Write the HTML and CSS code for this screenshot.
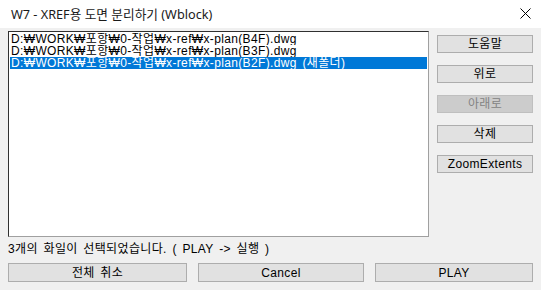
FILE: index.html
```html
<!doctype html>
<html>
<head>
<meta charset="utf-8" />
<title>W7 - XREF용 도면 분리하기 (Wblock)</title>
<link rel="stylesheet" href="styles.css">
</head>
<body>

<div class="dialog">
  <div class="titlebar">
    <span class="title">W7 - XREF용 도면 분리하기 (Wblock)</span>
    <svg class="close" width="11" height="11" viewBox="0 0 11 11">
      <path d="M0.5 0.5 L10.5 10.5 M10.5 0.5 L0.5 10.5" stroke="#000" stroke-width="1" fill="none"/>
    </svg>
  </div>

  <div class="body">
    <div class="main">
      <ul class="list">
        <li>D:₩WORK₩포항₩0-작업₩x-ref₩x-plan(B4F).dwg</li>
        <li>D:₩WORK₩포항₩0-작업₩x-ref₩x-plan(B3F).dwg</li>
        <li class="selected">D:₩WORK₩포항₩0-작업₩x-ref₩x-plan(B2F).dwg (새폴더)</li>
      </ul>
      <div class="side">
        <button class="btn">도움말</button>
        <button class="btn">위로</button>
        <button class="btn" disabled>아래로</button>
        <button class="btn">삭제</button>
        <button class="btn">ZoomExtents</button>
      </div>
    </div>

    <p class="status">3개의 화일이 선택되었습니다. ( PLAY -&gt; 실행 )</p>

    <div class="actions">
      <button class="btn">전체 취소</button>
      <button class="btn">Cancel</button>
      <button class="btn">PLAY</button>
    </div>
  </div>
</div>

</body>
</html>
```

FILE: styles.css
```css
* { box-sizing: border-box; }

html, body {
  margin: 0;
  padding: 0;
}

body {
  width: 541px;
  height: 290px;
  overflow: hidden;
  font-family: "Liberation Sans", "Noto Sans CJK KR", sans-serif;
  font-size: 12px;
  letter-spacing: 0.35px;
  word-spacing: 2px;
  color: #000;
}

.dialog {
  height: 290px;
  display: flex;
  flex-direction: column;
  background: #F0F0F0;
}

.titlebar {
  height: 28px;
  background: #FFF;
  display: flex;
  align-items: center;
  justify-content: space-between;
  padding: 0 10px 0 11px;
}

.title {
  font-family: "Noto Sans", "Noto Sans CJK KR", sans-serif;
  font-size: 12.7px;
  letter-spacing: 0;
  word-spacing: 0;
  color: #1a1a1a;
  margin-top: -2px;
}

.close { margin-top: -1px; }

.body {
  padding: 3px 8px 0 8px;
}

.main {
  display: flex;
  align-items: flex-start;
}

.list {
  list-style: none;
  margin: 0;
  padding: 1px 1px;
  width: 421px;
  height: 206px;
  background: #FFF;
  border: 1px solid #A0A0A0;
  border-top-color: #303030;
  border-left-color: #303030;
}

.list li {
  height: 12px;
  line-height: 12px;
  padding-left: 1px;
  white-space: nowrap;
  overflow: hidden;
}

.list li.selected {
  background: #0078D7;
  color: #FFF;
}

.side {
  display: flex;
  flex-direction: column;
  gap: 12px;
  margin-left: 8px;
  margin-top: 4px;
}

.btn {
  font-family: "Liberation Sans", "Noto Sans CJK KR", sans-serif;
  font-size: 12px;
  letter-spacing: 0.35px;
  word-spacing: 2px;
  color: #000;
  background: #E1E1E1;
  border: 1px solid #ADADAD;
  border-radius: 0;
  height: 18px;
  padding: 0;
  line-height: 14px;
}

.btn:disabled {
  background: #CCCCCC;
  border-color: #BFBFBF;
  color: #838383;
}

.side .btn { width: 96px; }

.status {
  margin: 5px 0 0 0;
  height: 14px;
  line-height: 14px;
}

.actions {
  display: flex;
  gap: 11px;
  margin-top: 7px;
}

.actions .btn { height: 19px; }
.actions .btn:nth-child(1) { width: 179px; }
.actions .btn:nth-child(2) { width: 166px; }
.actions .btn:nth-child(3) { width: 158px; }
```
